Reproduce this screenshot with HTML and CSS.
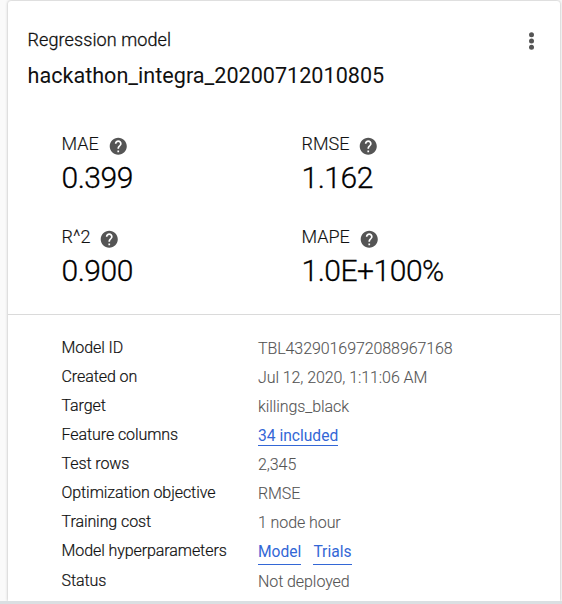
FILE: index.html
```
<!DOCTYPE html>
<html lang="en">
<head>
<meta charset="utf-8">
<title>Regression model</title>
<link rel="stylesheet" href="styles.css">
</head>
<body>
<svg class="defs" width="0" height="0"><symbol id="help" viewBox="0 0 24 24"><path d="M12 2C6.48 2 2 6.48 2 12s4.48 10 10 10 10-4.48 10-10S17.520 2 12 2zm1 17h-2v-2h2v2zm2.070-7.750l-.9.920C13.450 12.900 13 13.500 13 15h-2v-.5c0-1.100.45-2.100 1.170-2.830l1.240-1.260c.37-.36.59-.86.59-1.410 0-1.100-.9-2-2-2s-2 .9-2 2H8c0-2.210 1.790-4 4-4s4 1.790 4 4c0 .88-.36 1.680-.93 2.250z"/></symbol></svg>
<main class="card">
  <header class="head">
    <div><p class="kind">Regression model</p><h1 class="name">hackathon_integra_20200712010805</h1></div>
    <svg class="more" viewBox="0 0 24 24"><circle cx="12.500" cy="5.800" r="2.500"/><circle cx="12.500" cy="12" r="2.500"/><circle cx="12.500" cy="18.200" r="2.500"/></svg>
  </header>
  <section class="metrics">
    <div class="metric"><div class="label"><span>MAE</span><svg><use href="#help"/></svg></div><div class="value">0.399</div></div>
    <div class="metric"><div class="label"><span>RMSE</span><svg><use href="#help"/></svg></div><div class="value">1.162</div></div>
    <div class="metric"><div class="label"><span>R^2</span><svg><use href="#help"/></svg></div><div class="value">0.900</div></div>
    <div class="metric"><div class="label"><span>MAPE</span><svg><use href="#help"/></svg></div><div class="value">1.0E+100%</div></div>
  </section>
  <dl class="details">
    <dt>Model ID</dt><dd>TBL4329016972088967168</dd>
    <dt>Created on</dt><dd>Jul 12, 2020, 1:11:06 AM</dd>
    <dt>Target</dt><dd>killings_black</dd>
    <dt>Feature columns</dt><dd><a>34 included</a></dd>
    <dt>Test rows</dt><dd>2,345</dd>
    <dt>Optimization objective</dt><dd>RMSE</dd>
    <dt>Training cost</dt><dd>1 node hour</dd>
    <dt>Model hyperparameters</dt><dd><a class="action">Model</a><a class="action">Trials</a></dd>
    <dt>Status</dt><dd>Not deployed</dd>
  </dl>
</main>
</body>
</html>
```
FILE: styles.css
```
* { box-sizing: border-box; }
body { margin: 0; height: 604px; overflow: hidden; background: #dadfe2; font-family: Roboto, sans-serif; color: #111; display: flex; flex-direction: column; }
.defs { display: block; flex: none; }
p, h1, dl, dd { margin: 0; }
body::before { content: ""; position: absolute; inset: 0 0 3px; background: #fafafa; }
.card { position: relative; margin: 1px 2px 0 8px; height: 600px; background: #fff; border-radius: 3px 3px 0 0; box-shadow: 0 0 3px rgba(0, 0, 0, .3); clip-path: inset(-3px -3px 0 -4px); }
.head { display: flex; justify-content: space-between; padding: 27px 17px 0 19.500px; height: 125px; }
.kind { font-size: 18px; line-height: 24px; font-weight: 300; letter-spacing: .1px; -webkit-text-stroke: .3px; }
.name { margin-top: 9px; font-size: 21.600px; line-height: 30px; font-weight: 400; }
.more { width: 24px; height: 24px; margin-top: 1px; fill: #555; }
.metrics { display: grid; grid-template-columns: 240px 1fr; grid-auto-rows: 93px; height: 189px; padding: 5px 0 0 53.500px; border-bottom: 1px solid #dadada; font-weight: 300; }
.label { display: flex; align-items: center; gap: 9px; height: 24px; font-size: 18px; -webkit-text-stroke: .15px; }
.label svg { width: 20.500px; height: 20.500px; margin-top: 6px; fill: #555; -webkit-text-stroke: 0; }
.value { color: #000; font-size: 30px; line-height: 36px; margin-top: 5px; letter-spacing: -.48px; -webkit-text-stroke: .3px; }
.details { display: grid; grid-template-columns: 196.500px 1fr; grid-template-rows: repeat(8, 29px); padding: 19px 0 0 53.500px; font-size: 16px; line-height: 28px; font-weight: 300; letter-spacing: -.08px; }
.details dt { -webkit-text-stroke: .2px; }
.details dd { color: #555; padding-top: 1px; -webkit-text-stroke: .1px; }
.details dt:last-of-type { padding-top: 1px; }
.details dd:last-of-type { padding-top: 2px; }
.details a { display: inline-block; line-height: 18px; color: #3367d6; border-bottom: 1px solid #3367d6; margin-right: 12px; font-weight: 400; font-size: 15.600px; letter-spacing: 0; -webkit-text-stroke: 0; }
.details .action { padding-bottom: 3px; }
```
